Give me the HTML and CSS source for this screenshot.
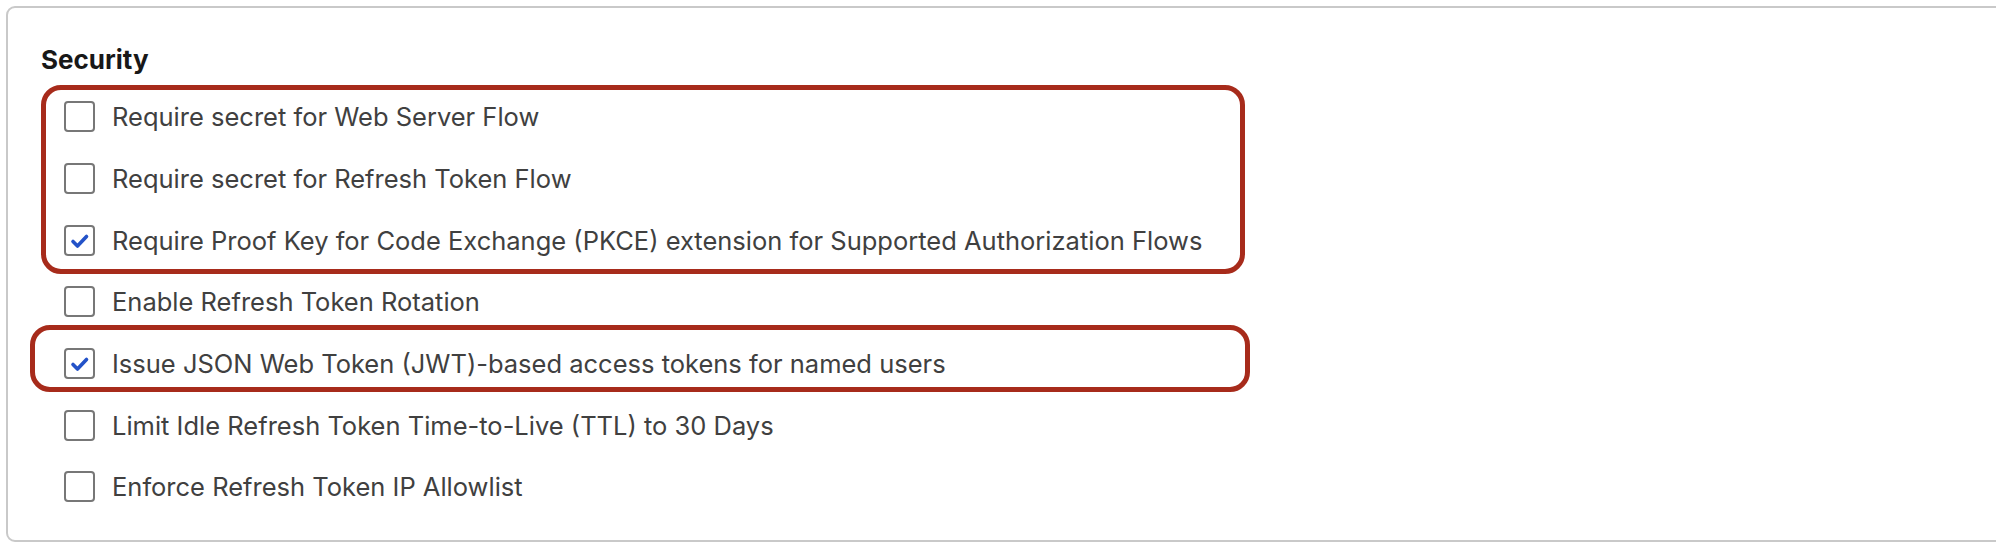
FILE: index.html
```html
<!DOCTYPE html>
<html lang="en">
<head>
    <meta charset="UTF-8">
    <title>Security</title>
    <link rel="stylesheet" href="styles.css">
</head>
<body>

<div class="card">
    <h2 class="section-title">Security</h2>

    <ul class="options">
        <li class="option"><span class="box"></span>Require secret for Web Server Flow</li>
        <li class="option"><span class="box"></span>Require secret for Refresh Token Flow</li>
        <li class="option"><span class="box checked"><svg viewBox="0 0 31 31"><path d="M9 16.5 L13.5 21 L22.5 11.5"/></svg></span>Require Proof Key for Code Exchange (PKCE) extension for Supported Authorization Flows</li>
        <li class="option"><span class="box"></span>Enable Refresh Token Rotation</li>
        <li class="option"><span class="box checked"><svg viewBox="0 0 31 31"><path d="M9 16.5 L13.5 21 L22.5 11.5"/></svg></span>Issue JSON Web Token (JWT)-based access tokens for named users</li>
        <li class="option"><span class="box"></span>Limit Idle Refresh Token Time-to-Live (TTL) to 30 Days</li>
        <li class="option"><span class="box"></span>Enforce Refresh Token IP Allowlist</li>
    </ul>

    <!-- annotation frames drawn over the list -->
    <div class="mark mark-pkce"></div>
    <div class="mark mark-jwt"></div>
</div>

</body>
</html>
```

FILE: styles.css
```css
body {
    margin: 6px;
    background-color: #fff;
    font-family: Inter, "Liberation Sans", Arial, sans-serif;
    overflow: hidden;
}
.card {
    position: relative;
    box-sizing: border-box;
    height: 536px;
    margin-right: -40px;
    padding: 36px 0 0 33px;
    border: 2px solid #c9c9c9;
    border-radius: 9px;
    background-color: #fff;
}
.section-title {
    margin: 0;
    font-size: 26px;
    line-height: 32px;
    font-weight: 700;
    color: #181818;
}
.options {
    list-style: none;
    margin: 10px 0 0 0;
    padding: 0 0 0 23px;
}
.option {
    display: flex;
    align-items: center;
    gap: 17px;
    height: 61.7px;
    font-size: 25.5px;
    color: #404040;
}
.box {
    flex: none;
    width: 31px;
    height: 31px;
    box-sizing: border-box;
    border: 2px solid #777;
    border-radius: 4px;
    background-color: #fff;
}
.box svg {
    display: block;
    width: 31px;
    height: 31px;
    margin: -2px;
}
.box path {
    fill: none;
    stroke: #2352c8;
    stroke-width: 3.6;
    stroke-linecap: round;
    stroke-linejoin: round;
}
.mark {
    position: absolute;
    box-sizing: border-box;
    border: 5px solid #a72b1b;
    border-radius: 20px;
}
.mark-pkce {
    left: 33px;
    top: 77px;
    width: 1204px;
    height: 189px;
}
.mark-jwt {
    left: 22px;
    top: 317px;
    width: 1220px;
    height: 67px;
}
```
